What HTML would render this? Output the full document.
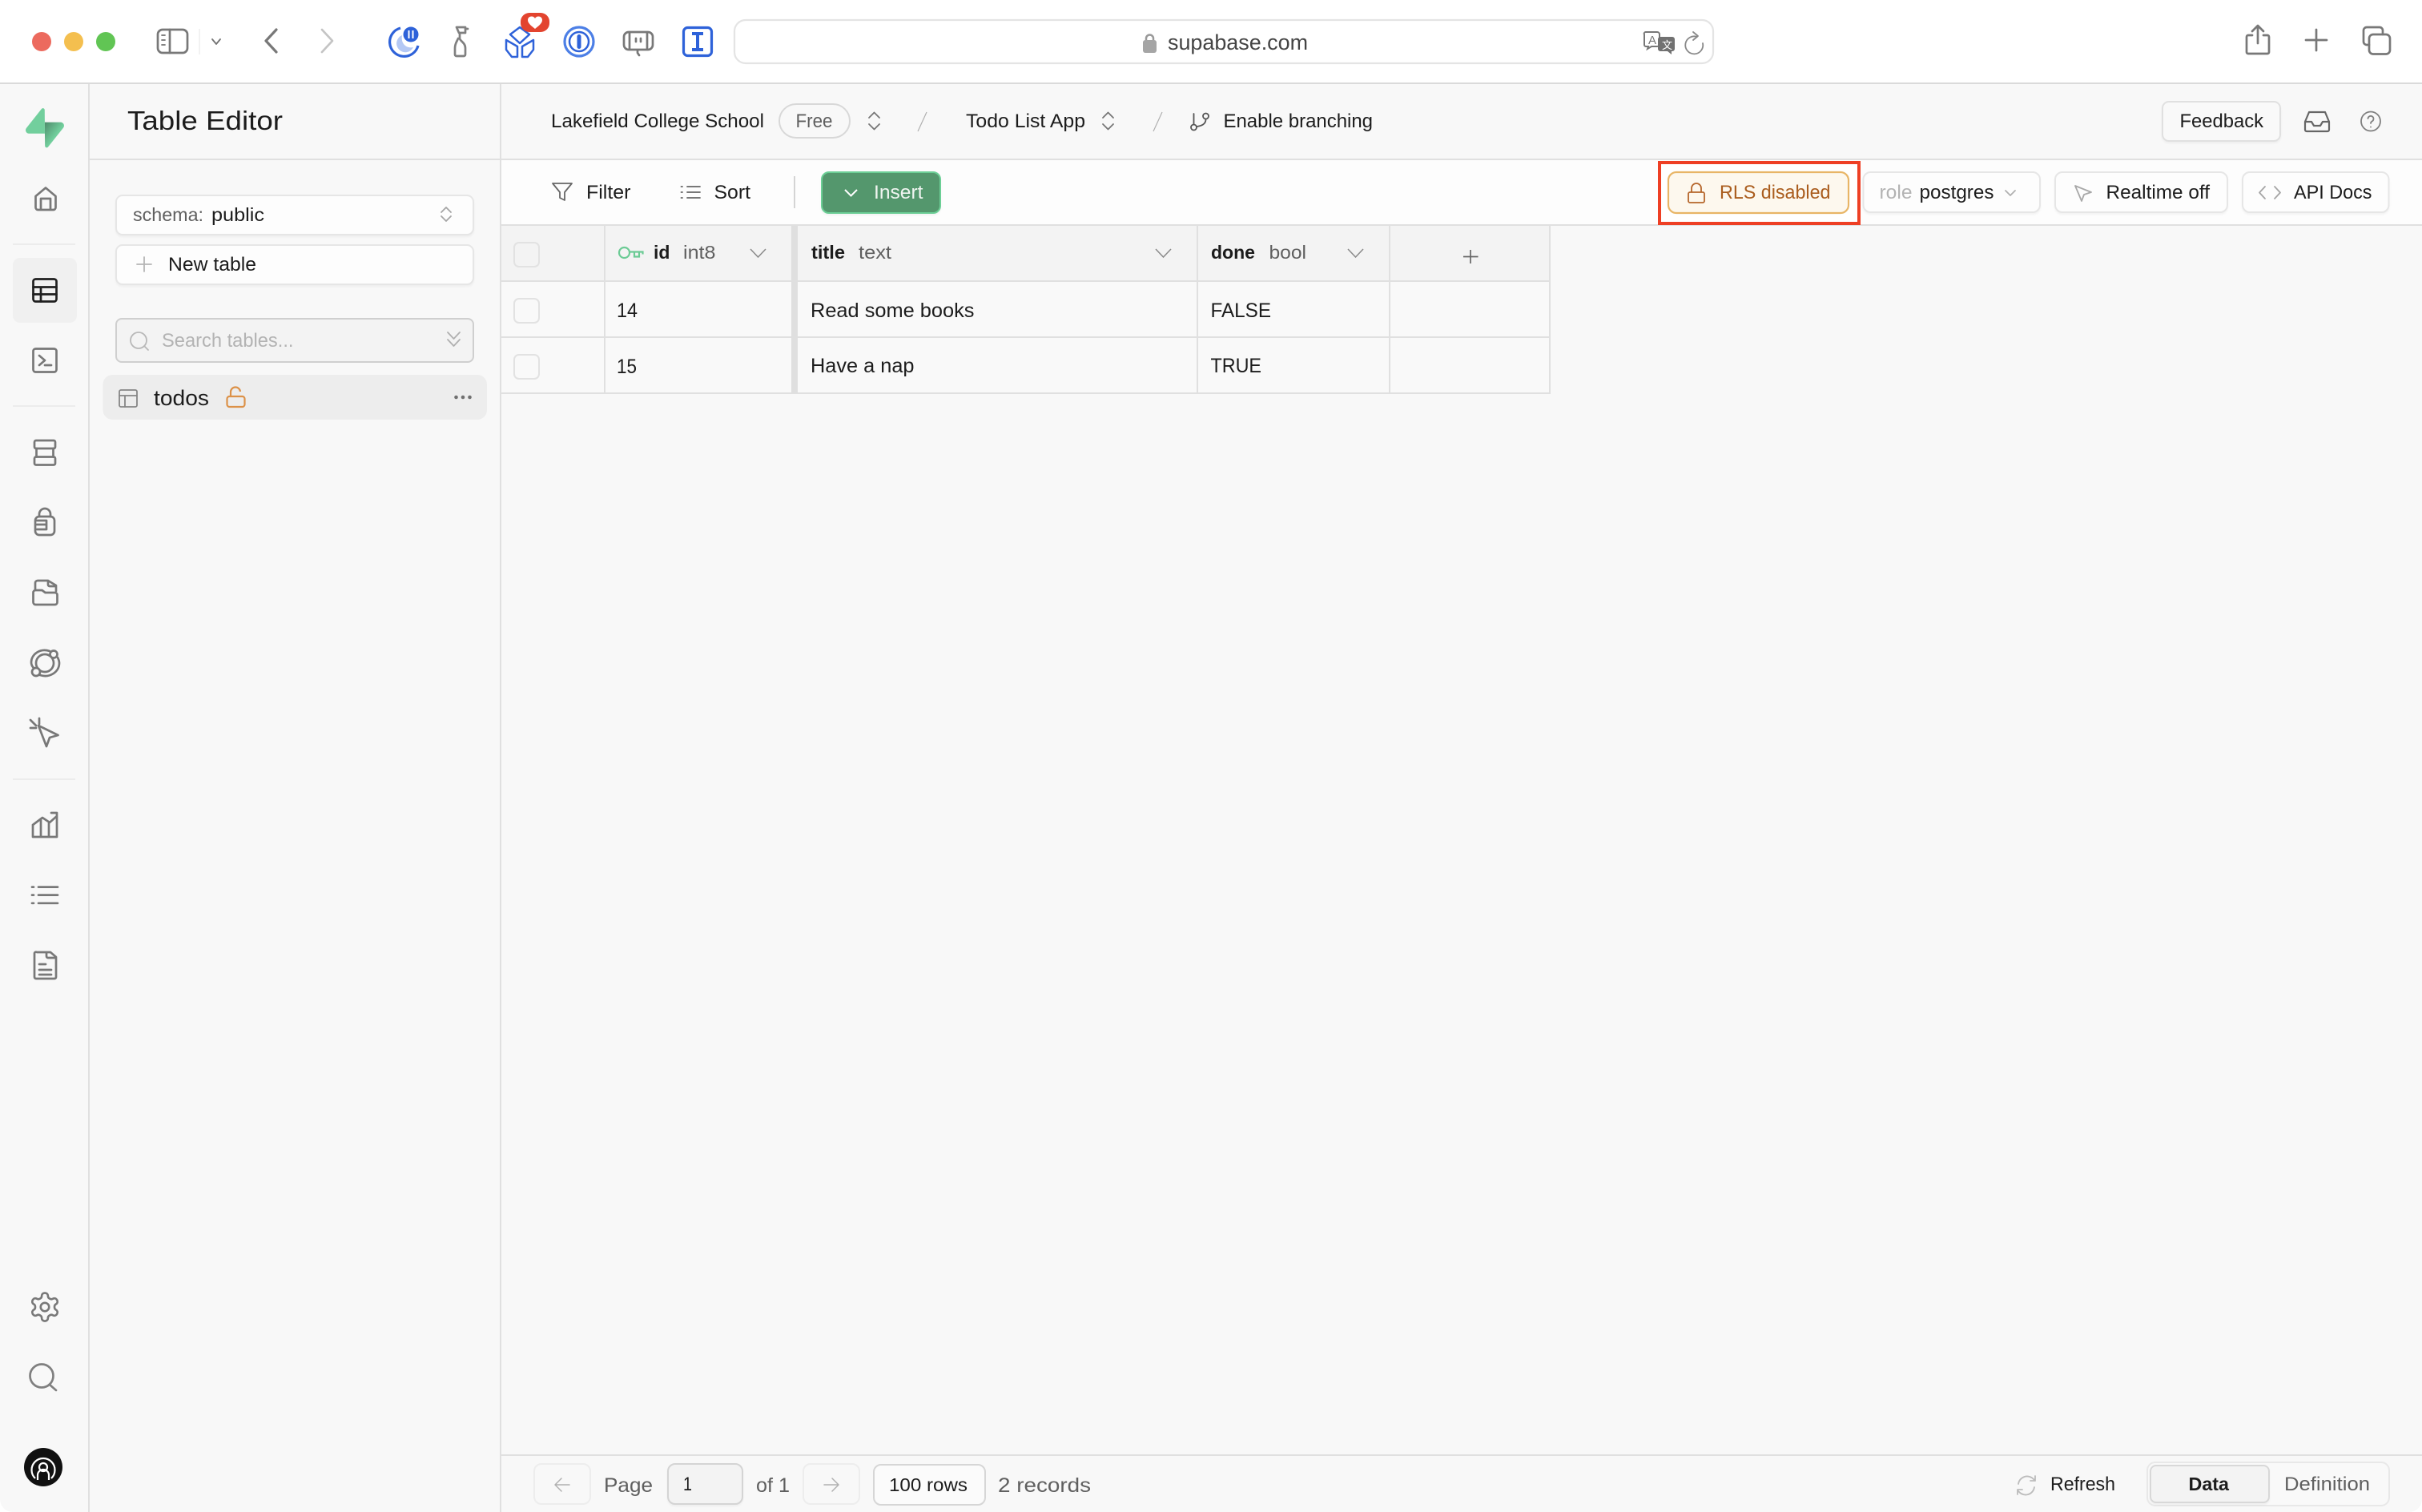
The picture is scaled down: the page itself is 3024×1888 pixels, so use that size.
<!DOCTYPE html>
<html><head><meta charset="utf-8"><title>Table Editor</title>
<style>
html,body{margin:0;padding:0;background:#fff;width:3024px;height:1888px;overflow:hidden}
svg{display:block;font-family:"Liberation Sans","Noto Sans CJK SC",sans-serif}
text{fill:#1c1c1c;font-size:24px}
.l{fill:none;stroke:#e0e0e0;stroke-width:2}
.i{fill:none;stroke:#787878;stroke-width:2.700;stroke-linecap:round;stroke-linejoin:round}
.t{fill:none;stroke:#727272;stroke-width:1.800;stroke-linecap:round;stroke-linejoin:round}
.b{fill:none;stroke:#2e62d9;stroke-width:3.200;stroke-linejoin:round}
.s{filter:drop-shadow(0 2px 1px rgba(0,0,0,.04))}
.g{fill:#5f5f5f}.m{fill:#b3b3b3}.h{font-weight:bold}
</style></head><body>
<svg xmlns="http://www.w3.org/2000/svg" width="3024" height="1888" viewBox="0 0 3024 1888">
<defs><linearGradient id="lg" x1="0" y1="0" x2="1" y2="1"><stop offset="0" stop-color="#4d8b6b"/><stop offset=".55" stop-color="#72cf9d"/><stop offset="1" stop-color="#72cf9d"/></linearGradient></defs>
<!-- app bg -->
<rect width="3024" height="1888" fill="#f8f8f8"/>
<rect width="3024" height="104" fill="#fff"/>
<rect y="103" width="3024" height="2" fill="#dadada"/>
<!-- traffic lights -->
<circle cx="52" cy="52" r="12" fill="#ec6a5e"/><circle cx="92" cy="52" r="12" fill="#f4bf4f"/><circle cx="132" cy="52" r="12" fill="#61c554"/>
<!-- browser controls -->
<rect x="197" y="37" width="37" height="29" rx="6" class="i"/><path d="M212 37v29" class="i"/><path d="M202 44h4M202 50h4M202 56h4" class="t"/>
<path d="M249 36v32" stroke="#eee" stroke-width="1.500"/>
<path d="M265 49l5 6 5-6" class="t"/>
<path d="M345 37l-13 14 13 14" class="i" style="stroke-width:3.200"/>
<path d="M402 37l13 14-13 14" class="i" style="stroke:#c4c4c4"/>
<!-- extensions -->
<path d="M500 35a18 18 0 1 0 22 22" class="b"/><path d="M502 44a11 11 0 1 0 14 15c-9 2-16-5-14-15z" fill="#b4c8f4"/>
<circle cx="513" cy="43" r="9.500" fill="#2e62d9"/><path d="M510.500 38v10M515.500 38v10" stroke="#fff" stroke-width="2"/>
<path d="M570 34h11v7h-8zM574 41v7c0 3 7 5 7 12v8a2 2 0 0 1-2 2h-9a2 2 0 0 1-2-2v-8c0-6 3-9 4-12M581 36h3" class="i" style="stroke:#808080"/>
<path d="M649 34l12 9-12 11-12-11z" class="b" style="stroke-width:2.500"/><path d="M632 50l14 8v13h-7l-7-9zM666 50l-14 8v13h7l7-9z" class="b" style="stroke-width:2.500"/>
<rect x="650" y="16" width="36" height="24" rx="11" fill="#e3442f"/><path d="M668 36c-5-4-9-7-9-11 0-5 7-6 9-2 2-4 9-3 9 2 0 4-4 7-9 11z" fill="#fff"/>
<circle cx="723" cy="52" r="18" class="b" style="stroke:#4c7fe6"/><circle cx="723" cy="52" r="12" class="b" style="stroke-width:2.500"/><rect x="720.500" y="43" width="5" height="18" rx="2.500" fill="#2e62d9"/>
<path d="M785 40h24a6 6 0 0 1 6 6v10a6 6 0 0 1-6 6h-24a6 6 0 0 1-6-6v-10a6 6 0 0 1 6-6zM786 40v22M808 40v22M796 62v4l2 3" class="i"/><path d="M794 48v4M800 48v4" class="i"/>
<rect x="853.500" y="34.500" width="35" height="35" rx="5" class="b"/><path d="M864 42h14M864 62h14M871 42v20" stroke="#2e62d9" stroke-width="4"/>
<!-- URL bar -->
<rect x="917" y="25" width="1222" height="54" rx="14" fill="#fff" stroke="#e4e4e4" stroke-width="2.200"/>
<path d="M1431 50v-2a4.500 4.500 0 0 1 9 0v2" fill="none" stroke="#999" stroke-width="2.500"/><rect x="1427" y="50" width="17" height="16" rx="3" fill="#a5a5a5"/>
<text x="1458" y="62" textLength="175" lengthAdjust="spacingAndGlyphs" style="font-size:26.500px;fill:#444">supabase.com</text>
<path d="M2055 40h14a3 3 0 0 1 3 3v12a3 3 0 0 1-3 3h-7l-5 3 1-3h-3a2 2 0 0 1-2-2V43a2 2 0 0 1 2-3z" fill="#fff" stroke="#777" stroke-width="2"/>
<text x="2058" y="55" textLength="10" lengthAdjust="spacingAndGlyphs" style="font-size:15px;fill:#777">A</text>
<path d="M2073 46h15a3 3 0 0 1 3 3v12a3 3 0 0 1-3 3h-1v4l-5-4h-9a3 3 0 0 1-3-3V49a3 3 0 0 1 3-3z" fill="#717171"/>
<text x="2075" y="61" style="font-size:13px;fill:#fff">文</text>
<path d="M2119 46a11 11 0 1 0 7 8M2114 40l6 5-6 5" class="t" style="stroke:#888"/>
<!-- right browser icons -->
<path d="M2812 44h-5a2 2 0 0 0-2 2v19a2 2 0 0 0 2 2h24a2 2 0 0 0 2-2V46a2 2 0 0 0-2-2h-5M2819 54V32M2812 39l7-7 7 7" class="i"/>
<path d="M2892 37v26M2879 50h26" class="i"/>
<rect x="2958" y="43" width="26" height="24.500" rx="5" class="i"/><path d="M2958 56h-3a4 4 0 0 1-4-4V38a4 4 0 0 1 4-4h16a4 4 0 0 1 4 4v5" class="i"/>
<!-- frame lines -->
<rect x="110" y="105" width="2" height="1783" fill="#e0e0e0"/>
<rect x="624" y="105" width="2" height="1783" fill="#e0e0e0"/>
<rect x="111" y="198" width="2913" height="2" fill="#e0e0e0"/>
<!-- logo -->
<g transform="translate(32 135) scale(.44)"><path d="M63.7076 110.284C60.8481 113.885 55.0502 111.912 54.9813 107.314L53.9738 40.0627L99.1935 40.0627C107.384 40.0627 111.952 49.5228 106.859 55.9374L63.7076 110.284Z" fill="url(#lg)"/><path d="M45.317 2.07103C48.1765 -1.53037 53.9745 0.442937 54.0434 5.041L54.4849 72.2922H9.83113C1.64038 72.2922 -2.92775 62.8321 2.1655 56.4175L45.317 2.07103Z" fill="#72cf9d"/></g>
<!-- nav icons -->
<path d="M44.500 245L57 234.500 69.500 245v14a3 3 0 0 1-3 3h-19a3 3 0 0 1-3-3zM51 262v-14h12v14" class="i"/>
<path d="M16 305h78M16 507h78M16 973h78" class="l" style="stroke:#ececec"/>
<rect x="16" y="322" width="80" height="81" rx="9" fill="#f0f0f0"/>
<rect x="41.500" y="348.500" width="29" height="28" rx="3" class="i" style="stroke:#1f1f1f"/><path d="M41.500 358.500h29M41.500 367.500h29M51 358.500v18" class="i" style="stroke:#1f1f1f"/>
<rect x="41.500" y="435.500" width="29" height="29" rx="3" class="i"/><path d="M49 444l7 6-7 6M56 456h8" class="i"/>
<rect x="43" y="550" width="26" height="10" rx="2" class="i"/><rect x="43" y="570.500" width="26" height="10" rx="2" class="i"/><path d="M45.500 560v10.500M66.500 560v10.500" class="i"/>
<rect x="44" y="645" width="24" height="23" rx="5" class="i"/><path d="M49 645v-3a7 7 0 0 1 14 0v3M46 650h12v11H46M46 655h11" class="i"/>
<path d="M44 736v-8a3 3 0 0 1 3-3h13l10 6v7M60 725v5a2 2 0 0 0 2 2h7" class="i"/><path d="M41.500 752v-12a3 3 0 0 1 3-3h8l4 3h12a3 3 0 0 1 3 3v9a3 3 0 0 1-3 3h-24a3 3 0 0 1-3-3z" class="i"/>
<circle cx="56" cy="828" r="11" class="i"/><path d="M62 813c-12-4-23 4-23 14 0 3 1 5 3 7M50 843c12 4 24-4 24-15 0-3-1-5-2-7" class="i"/><circle cx="67" cy="817" r="4.500" class="i" style="fill:#f8f8f8"/><circle cx="45" cy="839" r="5" class="i" style="fill:#f8f8f8"/>
<path d="M48 906l24.500 12-10.500 3-4 11zM38 899l7 7M49 897v7M38 909h7" class="i"/>
<path d="M41 1030l12-9 9 6 9-8M64 1015h7v7M41 1030v15h30v-24M51 1024v21M61 1028v17" class="i"/>
<path d="M48 1107.600h24M48 1117.600h24M48 1127.800h24" class="i"/><path d="M40 1107.600h2M40 1117.600h2M40 1127.800h2" class="i"/>
<path d="M46 1189h17l7 6v25a2 2 0 0 1-2 2H45a2 2 0 0 1-2-2v-29a2 2 0 0 1 3-2zM58 1189v5a2 2 0 0 0 2 2h9M49 1204h8M49 1211h15M49 1217h15" class="i"/>
<g transform="translate(35 1611) scale(1.75)" fill="none" stroke="#787878" stroke-width="1.500" stroke-linecap="round" stroke-linejoin="round"><path d="M12.220 2h-.44a2 2 0 0 0-2 2v.18a2 2 0 0 1-1 1.730l-.43.25a2 2 0 0 1-2 0l-.15-.08a2 2 0 0 0-2.730.73l-.22.38a2 2 0 0 0 .73 2.730l.15.1a2 2 0 0 1 1 1.720v.51a2 2 0 0 1-1 1.740l-.15.09a2 2 0 0 0-.73 2.730l.22.38a2 2 0 0 0 2.730.73l.15-.08a2 2 0 0 1 2 0l.43.25a2 2 0 0 1 1 1.730V20a2 2 0 0 0 2 2h.44a2 2 0 0 0 2-2v-.18a2 2 0 0 1 1-1.730l.43-.25a2 2 0 0 1 2 0l.15.08a2 2 0 0 0 2.730-.73l.22-.39a2 2 0 0 0-.73-2.730l-.15-.08a2 2 0 0 1-1-1.740v-.5a2 2 0 0 1 1-1.740l.15-.09a2 2 0 0 0 .73-2.730l-.22-.38a2 2 0 0 0-2.730-.73l-.15.08a2 2 0 0 1-2 0l-.43-.25a2 2 0 0 1-1-1.730V4a2 2 0 0 0-2-2z"/><circle cx="12" cy="12" r="3"/></g>
<circle cx="52" cy="1718" r="14.500" class="i" style="stroke:#808080"/><path d="M62 1729l8 7" class="i" style="stroke:#808080"/>
<circle cx="54" cy="1832" r="24" fill="#111"/><path d="M44 1846a14.500 14.500 0 1 1 20 0M47 1848v-6a7 7 0 0 1 14 0v6" fill="none" stroke="#fff" stroke-width="2.200"/><circle cx="54" cy="1832" r="5" fill="none" stroke="#fff" stroke-width="2.200"/>
<!-- side panel -->
<text x="159" y="162" textLength="194" lengthAdjust="spacingAndGlyphs" style="font-size:33px">Table Editor</text>
<rect x="145" y="244" width="446" height="49" rx="8" fill="#fdfdfd" stroke="#e6e6e6" stroke-width="2" class="s"/>
<text x="166" y="276" textLength="88" lengthAdjust="spacingAndGlyphs" class="g" style="font-size:23.500px">schema:</text>
<text x="264" y="276" textLength="66" lengthAdjust="spacingAndGlyphs" style="font-size:23.500px">public</text>
<path d="M551 265l6-6 6 6M551 270l6 6 6-6" class="t" style="stroke:#a5a5a5"/>
<rect x="145" y="306" width="446" height="49" rx="8" fill="#fdfdfd" stroke="#e6e6e6" stroke-width="2" class="s"/>
<path d="M180 321v18M171 330h18" class="t" style="stroke:#b5b5b5"/>
<text x="210" y="338" textLength="110" lengthAdjust="spacingAndGlyphs" style="font-size:24px">New table</text>
<rect x="145" y="398" width="446" height="54" rx="7" fill="#f3f3f3" stroke="#cfcfcf" stroke-width="2"/>
<circle cx="173" cy="425" r="10" class="t" style="stroke:#b8b8b8"/><path d="M181 433l4 4" class="t" style="stroke:#b8b8b8"/>
<text x="202" y="433" textLength="164.500" lengthAdjust="spacingAndGlyphs" class="m" style="font-size:24px">Search tables...</text>
<path d="M559 415l7.500 8 7.500-8M559 424l7.500 8 7.500-8" class="t" style="stroke:#b0b0b0"/>
<rect x="128.500" y="468" width="479.500" height="56" rx="12" fill="#ededed"/>
<rect x="149" y="487" width="22" height="21" rx="2" class="t" style="stroke:#858585"/><path d="M149 494h22M156 494v14" class="t" style="stroke:#858585"/>
<text x="192" y="506" textLength="69" lengthAdjust="spacingAndGlyphs" style="font-size:27px">todos</text>
<rect x="283.500" y="495" width="22" height="13" rx="3" fill="none" stroke="#dc9148" stroke-width="2.200"/><path d="M288 495v-5a6 6 0 0 1 12-1" fill="none" stroke="#dc9148" stroke-width="2.200"/>
<circle cx="569.500" cy="496" r="2.300" fill="#707070"/><circle cx="578" cy="496" r="2.300" fill="#707070"/><circle cx="586.500" cy="496" r="2.300" fill="#707070"/>
<!-- breadcrumb -->
<text x="688" y="159" textLength="266" lengthAdjust="spacingAndGlyphs">Lakefield College School</text>
<rect x="973" y="130" width="88" height="42" rx="21" fill="none" stroke="#d8d8d8" stroke-width="2"/>
<text x="993.500" y="159" textLength="46" lengthAdjust="spacingAndGlyphs" class="g">Free</text>
<path d="M1085 147l6.500-6.500 6.500 6.500M1085 155l6.500 6.500 6.500-6.500" class="t" style="stroke:#777"/>
<path d="M1157 140l-11 24M1451 140l-11 24" stroke="#b0b0b0" stroke-width="1.200" fill="none"/>
<text x="1206" y="159" textLength="149" lengthAdjust="spacingAndGlyphs">Todo List App</text>
<path d="M1377 147l6.500-6.500 6.500 6.500M1377 155l6.500 6.500 6.500-6.500" class="t" style="stroke:#777"/>
<circle cx="1490.500" cy="159" r="3.500" class="t" style="stroke:#555"/><circle cx="1505.500" cy="145" r="3.500" class="t" style="stroke:#555"/><path d="M1490.500 155V142M1505.500 149c0 6-5 8-11 9" class="t" style="stroke:#555"/>
<text x="1527.500" y="159" textLength="186.500" lengthAdjust="spacingAndGlyphs">Enable branching</text>
<rect x="2700" y="127" width="147" height="49" rx="8" fill="#f9f9f9" stroke="#e0e0e0" stroke-width="2" class="s"/>
<text x="2721.500" y="159" textLength="104.500" lengthAdjust="spacingAndGlyphs">Feedback</text>
<path d="M2878 152l5-12h20l5 12v10a2 2 0 0 1-2 2h-26a2 2 0 0 1-2-2zM2878 152h8l3 5h8l3-5h8" class="t" style="stroke:#666;stroke-width:2.200"/>
<circle cx="2960" cy="151.500" r="12" class="t" style="stroke:#808080"/><path d="M2956.500 148a3.500 3.500 0 1 1 5 3.500c-1 .7-1.500 1.200-1.500 2.500M2960 158.500v.1" class="t" style="stroke:#808080"/>
<!-- toolbar -->
<rect x="626" y="200" width="2398" height="80" fill="#fdfdfd"/>
<rect x="626" y="280" width="2398" height="2" fill="#e0e0e0"/>
<path d="M690 229h24l-9 11v10l-6-3v-7z" class="t" style="stroke:#666"/>
<text x="732" y="248" textLength="55.500" lengthAdjust="spacingAndGlyphs">Filter</text>
<path d="M858 233h16M858 240h16M858 247h16M850.500 233h1.500M850.500 240h1.500M850.500 247h1.500" class="t" style="stroke:#666"/>
<text x="891.500" y="248" textLength="45.500" lengthAdjust="spacingAndGlyphs">Sort</text>
<rect x="991" y="220" width="2" height="40" fill="#d4d4d4"/>
<rect x="1026" y="215" width="148" height="51" rx="9" fill="#54976d" stroke="#6ccf96" stroke-width="2" class="s"/>
<path d="M1055 237l7.500 7.500 7.500-7.500" fill="none" stroke="#fff" stroke-width="2"/>
<text x="1091" y="248" textLength="61.500" lengthAdjust="spacingAndGlyphs" style="fill:#f0f5f1">Insert</text>
<!-- right toolbar -->
<rect x="2072" y="203" width="249" height="76" fill="#fff" stroke="#ee3f24" stroke-width="4"/>
<rect x="2083" y="215" width="225" height="51" rx="10" fill="#fdf8ee" stroke="#e8b566" stroke-width="2.200"/>
<rect x="2108" y="240" width="20" height="13" rx="2" fill="none" stroke="#b5652a" stroke-width="1.800"/><path d="M2112 240v-5a6 6 0 0 1 12 0v5" fill="none" stroke="#b5652a" stroke-width="1.800"/>
<text x="2147" y="248" textLength="138.500" lengthAdjust="spacingAndGlyphs" style="fill:#aa5d1e">RLS disabled</text>
<rect x="2326.500" y="215" width="220.500" height="50" rx="9" fill="#fdfdfd" stroke="#e6e6e6" stroke-width="2" class="s"/>
<text x="2346.500" y="248" textLength="41" lengthAdjust="spacingAndGlyphs" class="m">role</text>
<text x="2396.500" y="248" textLength="93" lengthAdjust="spacingAndGlyphs">postgres</text>
<path d="M2504 238l6 6 6-6" class="t" style="stroke:#b0b0b0"/>
<rect x="2566" y="215" width="215" height="50" rx="9" fill="#fdfdfd" stroke="#e6e6e6" stroke-width="2" class="s"/>
<path d="M2591 232l20 8-9 3-3 8z" class="t" style="stroke:#a8a8a8"/>
<text x="2629.500" y="248" textLength="129.500" lengthAdjust="spacingAndGlyphs">Realtime off</text>
<rect x="2800" y="215" width="182.500" height="50" rx="9" fill="#fdfdfd" stroke="#e6e6e6" stroke-width="2" class="s"/>
<path d="M2828 233l-7 7.500 7 7.500M2840 233l7 7.500-7 7.500" class="t" style="stroke:#a5a5a5"/>
<text x="2864" y="248" textLength="97.500" lengthAdjust="spacingAndGlyphs">API Docs</text>
<!-- table -->
<rect x="626" y="282" width="1309" height="69" fill="#f3f3f3"/>
<rect x="626" y="351" width="1309" height="140" fill="#f9f9f9"/>
<path d="M626 351h1309M626 421h1309M626 491h1309M755 282v209M1495 282v209M1735 282v209M1935 282v210" class="l"/>
<rect x="988" y="282" width="8" height="209" fill="#dfdfdf"/>
<rect x="642" y="303" width="31" height="30" rx="6" fill="none" stroke="#e2e2e2" stroke-width="2"/>
<rect x="642" y="373" width="31" height="30" rx="6" fill="none" stroke="#e2e2e2" stroke-width="2"/>
<rect x="642" y="443" width="31" height="30" rx="6" fill="none" stroke="#e2e2e2" stroke-width="2"/>
<circle cx="779.500" cy="315.500" r="6.500" fill="none" stroke="#6ccb95" stroke-width="2.200"/><path d="M786 314.500h16.500v3M792 314.500v6h6v-6" fill="none" stroke="#6ccb95" stroke-width="2.200"/>
<text x="816" y="323" textLength="20.500" lengthAdjust="spacingAndGlyphs" class="h" style="font-size:23px">id</text>
<text x="853" y="323" textLength="40.500" lengthAdjust="spacingAndGlyphs" class="g" style="font-size:23px">int8</text>
<path d="M937 311l9.500 10 9.500-10M1443 311l9.500 10 9.500-10M1683 311l9.500 10 9.500-10" fill="none" stroke="#8a8a8a" stroke-width="1.500"/>
<text x="1013" y="323" textLength="42" lengthAdjust="spacingAndGlyphs" class="h" style="font-size:23px">title</text>
<text x="1072" y="323" textLength="41" lengthAdjust="spacingAndGlyphs" class="g" style="font-size:23px">text</text>
<text x="1512" y="323" textLength="55" lengthAdjust="spacingAndGlyphs" class="h" style="font-size:23px">done</text>
<text x="1584.500" y="323" textLength="46.500" lengthAdjust="spacingAndGlyphs" class="g" style="font-size:23px">bool</text>
<path d="M1836 312v17M1827 320.500h18.500" fill="none" stroke="#666" stroke-width="1.700"/>
<text x="770" y="396" textLength="26" lengthAdjust="spacingAndGlyphs" style="font-size:25px">14</text>
<text x="770" y="466" textLength="25" lengthAdjust="spacingAndGlyphs" style="font-size:25px">15</text>
<text x="1012" y="396" textLength="204.500" lengthAdjust="spacingAndGlyphs" style="font-size:25px">Read some books</text>
<text x="1012" y="465" textLength="129.500" lengthAdjust="spacingAndGlyphs" style="font-size:25px">Have a nap</text>
<text x="1511.500" y="396" textLength="75.500" lengthAdjust="spacingAndGlyphs" style="font-size:25px">FALSE</text>
<text x="1511.500" y="465" textLength="63.500" lengthAdjust="spacingAndGlyphs" style="font-size:25px">TRUE</text>
<!-- footer -->
<rect x="626" y="1816" width="2398" height="2" fill="#e0e0e0"/>
<rect x="667" y="1828" width="70" height="50" rx="9" fill="none" stroke="#ededed" stroke-width="2"/>
<path d="M711 1854h-17M701 1846l-8 8 8 8" class="t" style="stroke:#b0b0b0;stroke-width:1.500"/>
<text x="754" y="1863" textLength="61" lengthAdjust="spacingAndGlyphs" class="g" style="font-size:25px">Page</text>
<rect x="834" y="1828" width="93" height="50" rx="9" fill="#f3f3f3" stroke="#d4d4d4" stroke-width="2" class="s"/>
<text x="853" y="1861" textLength="11" lengthAdjust="spacingAndGlyphs" style="font-size:24px">1</text>
<text x="944" y="1863" textLength="42" lengthAdjust="spacingAndGlyphs" class="g" style="font-size:25px">of 1</text>
<rect x="1003" y="1828" width="70" height="50" rx="9" fill="none" stroke="#ededed" stroke-width="2"/>
<path d="M1029 1854h17M1039 1846l8 8-8 8" class="t" style="stroke:#b0b0b0;stroke-width:1.500"/>
<rect x="1091" y="1829" width="139" height="50" rx="9" fill="#fbfbfb" stroke="#d6d6d6" stroke-width="2"/>
<text x="1110" y="1862" textLength="98" lengthAdjust="spacingAndGlyphs" style="font-size:23px">100 rows</text>
<text x="1246" y="1863" textLength="116" lengthAdjust="spacingAndGlyphs" class="g" style="font-size:25px">2 records</text>
<path d="M2520 1853a11 11 0 0 1 19-6l2 2M2541 1843v6h-6M2540 1857a11 11 0 0 1-19 6l-2-2M2519 1866v-6h6" class="t" style="stroke:#bcbcbc"/>
<text x="2560" y="1861" textLength="81" lengthAdjust="spacingAndGlyphs" style="font-size:24px">Refresh</text>
<rect x="2681" y="1826" width="302" height="54" rx="10" fill="#f9f9f9" stroke="#e8e8e8" stroke-width="2"/>
<rect x="2685" y="1830" width="148" height="46" rx="7" fill="#f3f3f3" stroke="#d8d8d8" stroke-width="2" class="s"/>
<text x="2732.500" y="1861" textLength="50.500" lengthAdjust="spacingAndGlyphs" class="h" style="font-size:23px">Data</text>
<text x="2852" y="1861" textLength="107" lengthAdjust="spacingAndGlyphs" class="g" style="font-size:24px">Definition</text>
<!-- window corners -->
<path d="M0 1888v-16a16 16 0 0 0 16 16zM3024 1888v-16a16 16 0 0 1-16 16z" fill="#fff"/>
</svg>
</body></html>
